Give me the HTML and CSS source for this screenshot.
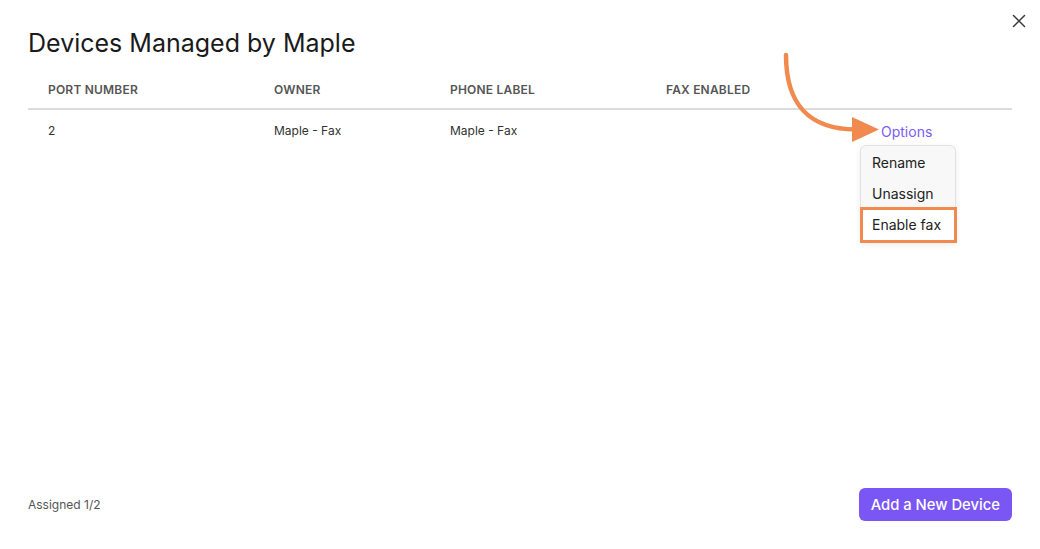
FILE: index.html
```html
<!DOCTYPE html>
<html lang="en">
<head>
    <meta charset="UTF-8">
    <meta name="viewport" content="width=device-width, initial-scale=1.0">
    <title>Devices Managed by Maple</title>
    <link rel="stylesheet" href="styles.css">
</head>
<body>
    <div class="modal">
        <button class="close-button" aria-label="Close">
            <svg width="14" height="14" viewBox="0 0 14 14">
                <path d="M1.5 1.5 L12.5 12.5 M12.5 1.5 L1.5 12.5" stroke="#3a3a3a" stroke-width="1.5" stroke-linecap="round"/>
            </svg>
        </button>

        <h1>Devices Managed by Maple</h1>

        <div class="table">
            <div class="row head">
                <div>Port Number</div>
                <div>Owner</div>
                <div>Phone Label</div>
                <div>Fax Enabled</div>
                <div></div>
            </div>
            <div class="row">
                <div>2</div>
                <div>Maple - Fax</div>
                <div>Maple - Fax</div>
                <div></div>
                <div><a class="options-link" href="#">Options</a></div>
            </div>
        </div>

        <footer>
            <span class="assigned">Assigned 1/2</span>
            <button class="primary-button">Add a New Device</button>
        </footer>

        <!-- menu de opciones abierto -->
        <ul class="menu">
            <li>Rename</li>
            <li>Unassign</li>
            <li class="highlight">Enable fax</li>
        </ul>

        <!-- flecha de anotacion -->
        <svg class="arrow" width="1040" height="549" viewBox="0 0 1040 549">
            <path d="M786 55 C786 104 808 129 856 129.5" fill="none" stroke="#f08a4f" stroke-width="4.5" stroke-linecap="round"/>
            <polygon points="852,117 879,129.5 852,142" fill="#f08a4f"/>
        </svg>
    </div>
</body>
</html>
```

FILE: styles.css
```css
:root {
    --primary-color: #7a56f5;
    --text-color: #1f1f1f;
    --muted-color: #555;
    --border-color: #dcdcdc;
    --accent-color: #f08a4f;
}

* {
    box-sizing: border-box;
    margin: 0;
    padding: 0;
}

body {
    font-family: Inter, 'Noto Sans', Arial, sans-serif;
    color: var(--text-color);
    background-color: white;
}

.modal {
    position: relative;
    height: 549px;
    padding: 28px 28px 28px;
    display: flex;
    flex-direction: column;
}

.close-button {
    position: absolute;
    top: 14px;
    right: 14px;
    width: 14px;
    height: 14px;
    border: none;
    background: none;
    cursor: pointer;
}

h1 {
    font-size: 25px;
    font-weight: 400;
    line-height: 30px;
    color: #1a1a1a;
}

.table {
    margin-top: 12px;
}

.row {
    display: grid;
    grid-template-columns: 226px 176px 216px 215px 1fr;
    padding-left: 20px;
    font-size: 12px;
    color: #333;
}

.row > div {
    padding: 13px 0 15px;
    line-height: 16px;
}

.row.head {
    font-weight: 600;
    text-transform: uppercase;
    color: var(--muted-color);
    letter-spacing: 0.2px;
    border-bottom: 2px solid var(--border-color);
}

.row.head > div {
    padding: 12px 0 10px;
}

.options-link {
    color: #7b5cf6;
    font-size: 14px;
    text-decoration: none;
    position: relative;
    top: 1px;
}

footer {
    margin-top: auto;
    display: flex;
    justify-content: space-between;
    align-items: center;
}

.assigned {
    font-size: 12px;
    color: #555;
}

.primary-button {
    background-color: var(--primary-color);
    color: white;
    border: none;
    border-radius: 6px;
    font-family: inherit;
    font-size: 14.8px;
    font-weight: 500;
    padding: 0 12px;
    height: 33px;
    cursor: pointer;
}

.menu {
    position: absolute;
    top: 145px;
    left: 860px;
    width: 96px;
    list-style: none;
    background-color: #f8f8f8;
    border: 1px solid #e2e2e2;
    border-radius: 6px;
    box-shadow: 0 2px 6px rgba(0, 0, 0, 0.08);
    padding-top: 1px;
    font-size: 14px;
    color: #222;
}

.menu li {
    height: 31px;
    line-height: 31px;
    padding-left: 11px;
}

.menu li.highlight {
    height: 36px;
    line-height: 30px;
    margin: -2px -2px -1px -1px;
    padding-left: 9px;
    border: 3px solid var(--accent-color);
    background-color: white;
}

.arrow {
    position: absolute;
    top: 0;
    left: 0;
    pointer-events: none;
}
```
